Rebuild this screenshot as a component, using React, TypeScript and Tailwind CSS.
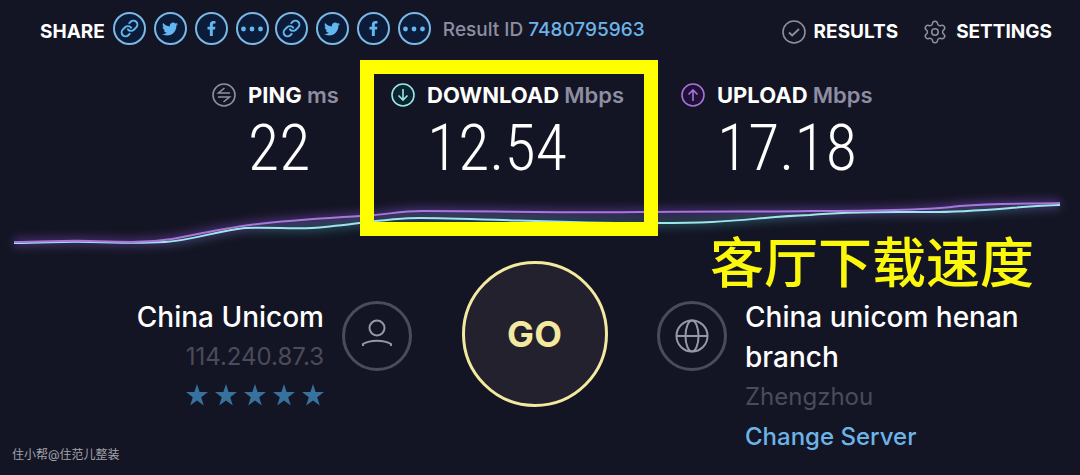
import { FC, PropsWithChildren, ReactNode } from "react";
import { Link, Settings } from "lucide-react";
import { FaFacebookF, FaTwitter } from "react-icons/fa";

const shareItems: { label: string, icon: ReactNode }[] = [
  { label: "Copy link", icon: <Link size={19} strokeWidth={2.5} /> },
  { label: "Share on Twitter", icon: <FaTwitter size={16} /> },
  { label: "Share on Facebook", icon: <FaFacebookF size={15} /> },
  { label: "More", icon: <Dots /> },
];

function Dots() {
  return <svg width="24" height="6" viewBox="0 0 24 6" fill="currentColor">
    <circle cx="3.5" cy="3" r="2.4" />
    <circle cx="12" cy="3" r="2.4" />
    <circle cx="20.5" cy="3" r="2.4" />
  </svg>
}

const ShareGroup: FC = () => {
  return <div className="flex gap-2">
    {shareItems.map(({ label, icon }) => <button
      key={label}
      aria-label={label}
      className="flex size-[33px] items-center justify-center rounded-full border-2 border-[#7ab8e6] bg-[#0c1c38] text-[#62b7f0]"
    >{icon}</button>)}
  </div>
}

const Header: FC = () => {
  return <header className="flex items-start justify-between pt-3 pr-7 pl-10">
    <div className="flex items-start">
      <span className="mt-1 mr-2 text-[19px] leading-8 font-bold">SHARE</span>
      <div className="flex gap-1.5">
        <ShareGroup />
        <ShareGroup />
      </div>
      <p className="mt-0.5 ml-3 text-[19px] leading-8 font-medium text-[#8e8ea2]">
        Result ID <a href="#result" className="text-[#6cb4e8]">7480795963</a>
      </p>
    </div>
    <nav className="mt-1 flex items-center gap-6 text-[19px] leading-8 font-bold">
      <a href="#results" className="flex items-center gap-2">
        <svg className="size-6 text-[#8e8ea2]" viewBox="0 0 24 24" fill="none" stroke="currentColor" strokeWidth="1.6">
          <circle cx="12" cy="12" r="11" />
          <path d="M7 12.5l3.2 3L17 9" strokeWidth="1.8" />
        </svg>
        RESULTS
      </a>
      <a href="#settings" className="flex items-center gap-2">
        <Settings className="size-[26px] text-[#8e8ea2]" strokeWidth={1.4} />
        SETTINGS
      </a>
    </nav>
  </header>
}

interface MetricProps {
  name: string
  unit: string
  value: string
  icon: ReactNode
}

const Metric: FC<PropsWithChildren<MetricProps>> = ({ name, unit, value, icon, children }) => {
  return <section className="relative whitespace-nowrap">
    <h2 className="flex items-center gap-3 text-[22px] leading-7 font-bold">
      {icon}
      <span>{name} <span className="font-semibold text-[#8e8ea2]">{unit}</span></span>
    </h2>
    <p className="pl-9 font-['Roboto_Condensed',Roboto,sans-serif] text-[64px] leading-[80px] font-light">{value}</p>
    {children}
  </section>
}

const PingIcon: FC = () => <svg className="size-6 text-[#8e8ea2]" viewBox="0 0 24 24" fill="none" stroke="currentColor" strokeWidth="1.6">
  <circle cx="12" cy="12" r="11" />
  <path d="M18 10H6.5L12.5 5M6 14h11.5L11.500 19" />
</svg>

const DownloadIcon: FC = () => <svg className="size-6" viewBox="0 0 24 24" fill="#0b2530" stroke="#9be8e6" strokeWidth="1.6">
  <circle cx="12" cy="12" r="11" />
  <path d="M12 6v11M7.5 12.5L12 17l4.5-4.5" fill="none" />
</svg>

const UploadIcon: FC = () => <svg className="size-6" viewBox="0 0 24 24" fill="#1f1038" stroke="#a873d8" strokeWidth="1.6">
  <circle cx="12" cy="12" r="11" />
  <path d="M12 18V7M7.5 11.5L12 7l4.5 4.5" fill="none" />
</svg>

const uploadPath = "M14 51C50 51 60 49 90 50C125 51 145 52 172 48C200 43 225 37 250 34C290 29 330 27 360 25C385 24 400 20 422 20C500 20 560 22 640 21C720 20 760 21 810 20C880 20 930 19 960 15C1000 12 1030 13 1060 12";
const downloadPath = "M14 52C50 52 60 50 90 51C125 52 145 52 165 51C195 49 215 40 245 37C270 36 290 38 312 37C345 35 385 27 420 27C500 28 560 32 640 32C740 33 750 26 810 24C850 20 890 21 930 21C980 21 1020 15 1060 14";

const SpeedChart: FC = () => {
  return <svg className="block h-[70px] w-full" viewBox="0 0 1080 70" preserveAspectRatio="none" fill="none" aria-hidden="true">
    <defs>
      <filter id="glow" filterUnits="userSpaceOnUse" x="0" y="0" width="1080" height="70">
        <feGaussianBlur stdDeviation="4" />
      </filter>
    </defs>
    <g filter="url(#glow)" strokeWidth="8" opacity="0.5">
      <path d={downloadPath} stroke="#2f7d84" />
      <path d={uploadPath} stroke="#7340b0" />
    </g>
    <path d={downloadPath} stroke="#9fe6ea" strokeWidth="2" />
    <path d={uploadPath} stroke="#a678dc" strokeWidth="2" />
  </svg>
}

const Badge: FC<PropsWithChildren> = ({ children }) => {
  return <div className="mt-1 flex size-[70px] shrink-0 items-center justify-center rounded-full border-[3px] border-[#4b4b5a] text-[#9797aa]">{children}</div>
}

const Stars: FC = () => {
  return <div className="flex h-9 items-center justify-end gap-[7px] text-[#37719e]" role="img" aria-label="5 stars">
    {[1, 2, 3, 4, 5].map(i => <svg key={i} className="size-[22px]" viewBox="0 0 22 22" fill="currentColor">
      <path d="M11 0l2.6 8H22l-6.8 5.2L17.8 21.5 11 16.4 4.2 21.5 6.8 13.2 0 8h8.4z" />
    </svg>)}
  </div>
}

export default function App() {
  return <main className="relative min-h-screen overflow-hidden bg-[#141524] font-[Inter,'Noto_Sans_CJK_SC',sans-serif] text-white">
    <Header />

    <div className="mt-[33px] grid grid-cols-[212fr_179fr_290fr_399fr]">
      <div />
      <Metric name="PING" unit="ms" value="22" icon={<PingIcon />} />
      <Metric name="DOWNLOAD" unit="Mbps" value="12.54" icon={<DownloadIcon />}>
        <div className="absolute -top-[21px] -left-[31px] z-10 h-[176px] w-[298px] border-[14px] border-[#ffff00]" />
      </Metric>
      <Metric name="UPLOAD" unit="Mbps" value="17.18" icon={<UploadIcon />} />
    </div>

    <div className="relative mt-0.5">
      <SpeedChart />
      <p className="absolute top-[37px] right-[46px] font-['Noto_Sans_CJK_SC',sans-serif] text-[54px] leading-[64px] font-medium text-[#fbf80c]">客厅下载速度</p>
    </div>

    <div className="grid grid-cols-[412fr_245fr_423fr] items-start">
      <div className="mt-9 flex justify-end gap-[18px] text-right">
        <div>
          <h3 className="text-[28px] leading-10 font-medium">China Unicom</h3>
          <p className="text-2xl leading-10 text-[#4b4b5a]">114.240.87.3</p>
          <Stars />
        </div>
        <Badge>
          <svg width="34" height="34" viewBox="0 0 34 34" fill="none" stroke="currentColor" strokeWidth="2">
            <circle cx="17" cy="9" r="7.5" />
            <path d="M3 27V25c7-4.5 21-4.5 28 0v2" />
          </svg>
        </Badge>
      </div>
      <button className="mx-auto size-[146px] rounded-full border-[3px] border-[#f3e9a0] bg-[#22212d] text-4xl font-bold text-[#f3e9a0]">GO</button>
      <div className="mt-9 flex gap-[18px]">
        <Badge>
          <svg width="34" height="34" viewBox="0 0 34 34" fill="none" stroke="currentColor" strokeWidth="2">
            <circle cx="17" cy="17" r="15.5" />
            <ellipse cx="17" cy="17" rx="6.5" ry="15.5" />
            <path d="M1.5 17h31" />
          </svg>
        </Badge>
        <div className="max-w-[300px] text-2xl leading-10">
          <h3 className="text-[28px] leading-10 font-medium">China unicom henan branch</h3>
          <p className="text-[#4b4b5a]">Zhengzhou</p>
          <a href="#servers" className="font-medium text-[#6cb4e8]">Change Server</a>
        </div>
      </div>
    </div>

    <p className="absolute bottom-3 left-3 text-xs text-[#a3a3ac]">住小帮@住范儿整装</p>
  </main>
}
